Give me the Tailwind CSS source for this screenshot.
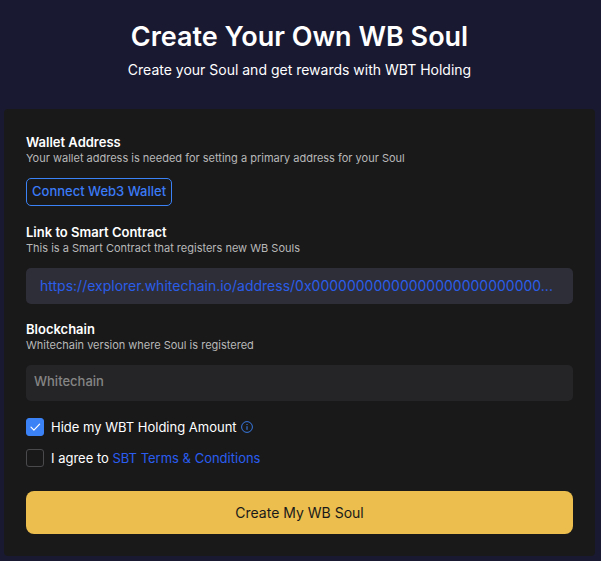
<!DOCTYPE html>
<html lang="en">
<head>
    <meta charset="UTF-8">
    <meta name="viewport" content="width=device-width, initial-scale=1.0">
    <title>Create Your Own WB Soul</title>
    <script src="https://cdn.jsdelivr.net/npm/@tailwindcss/browser@4"></script>
</head>
<body class="bg-[#191932] min-h-screen pl-1 pr-1.5 pb-1 font-['Inter',sans-serif] text-white">
<header class="pt-[17px] pb-7 text-center">
    <h1 class="text-[27px] leading-10 font-semibold">Create Your Own WB Soul</h1>
    <p class="mt-0.5 text-sm leading-[22px]">Create your Soul and get rewards with WBT Holding</p>
</header>

<main class="rounded bg-[#19191a] px-[22px] pt-[25px] pb-[22px]">
    <form id="soulForm">
        <!-- Wallet -->
        <section class="mb-[18px]">
            <h2 class="text-[13px] leading-4 font-semibold">Wallet Address</h2>
            <p class="text-[11px] leading-4 text-[#b8b8b8]">Your wallet address is needed for setting a primary address for your Soul</p>
            <button type="button" class="mt-3 block h-7 rounded-[5px] border border-[#3b82f6] px-[5px] text-[13px] font-medium text-[#3b7bf6]">Connect Web3 Wallet</button>
        </section>

        <!-- Smart contract -->
        <section class="mb-[17px]">
            <h2 class="text-[13px] leading-4 font-semibold">Link to Smart Contract</h2>
            <p class="text-[11px] leading-4 text-[#b8b8b8]">This is a Smart Contract that registers new WB Souls</p>
            <div class="mt-3 flex h-9 items-center rounded-[5px] bg-[#2e2e38] px-3.5">
                <a href="#" class="text-sm leading-6 text-[#2a5de8]">https://explorer.whitechain.io/address/0x00000000000000000000000000...</a>
            </div>
        </section>

        <!-- Blockchain -->
        <section class="mb-[17px]">
            <label for="blockchain" class="block text-[13px] leading-4 font-semibold">Blockchain</label>
            <p class="text-[11px] leading-4 text-[#b8b8b8]">Whitechain version where Soul is registered</p>
            <input type="text" id="blockchain" value="Whitechain" disabled class="mt-3 block h-9 w-full rounded-[5px] bg-[#252527] px-2 pb-1 text-[13px] font-medium text-[#858585]">
        </section>

        <div class="flex flex-col gap-[13px] text-[13px] leading-[18px]">
            <div class="flex items-center">
                <span class="relative size-[18px]">
                    <input type="checkbox" id="hideAmount" checked class="peer block size-[18px] appearance-none rounded-[3px] border border-[#4a4a4d] checked:border-[#3b82f6] checked:bg-[#3b82f6]">
                    <svg class="pointer-events-none absolute inset-0 hidden peer-checked:block" width="18" height="18" viewBox="0 0 18 18" fill="none" stroke="#fff" stroke-width="1.2" stroke-linecap="round" stroke-linejoin="round"><path d="M5 9.2l2.9 2.9L13.6 6.2"/></svg>
                </span>
                <label for="hideAmount" class="ml-[7px]">Hide my WBT Holding Amount</label>
                <svg class="ml-1" width="12" height="12" viewBox="0 0 12 12" fill="none" stroke="#3b82f6" role="img" aria-label="Info"><circle cx="6" cy="6" r="5.4" stroke-width=".9"/><path d="M6 5.2v3.6M6 3v1" stroke-width="1"/></svg>
            </div>
            <div class="flex items-center">
                <input type="checkbox" id="terms" class="block size-[18px] appearance-none rounded-[3px] border border-[#4a4a4d] checked:border-[#3b82f6] checked:bg-[#3b82f6]">
                <label for="terms" class="ml-[7px]">I agree to <a href="#" class="text-[#2a5df0]">SBT Terms &amp; Conditions</a></label>
            </div>
        </div>

        <button type="submit" class="mt-6 h-[43px] w-full rounded-lg bg-[#ebbe4d] text-sm text-[#19191a]">Create My WB Soul</button>
    </form>
</main>
</body>
</html>
